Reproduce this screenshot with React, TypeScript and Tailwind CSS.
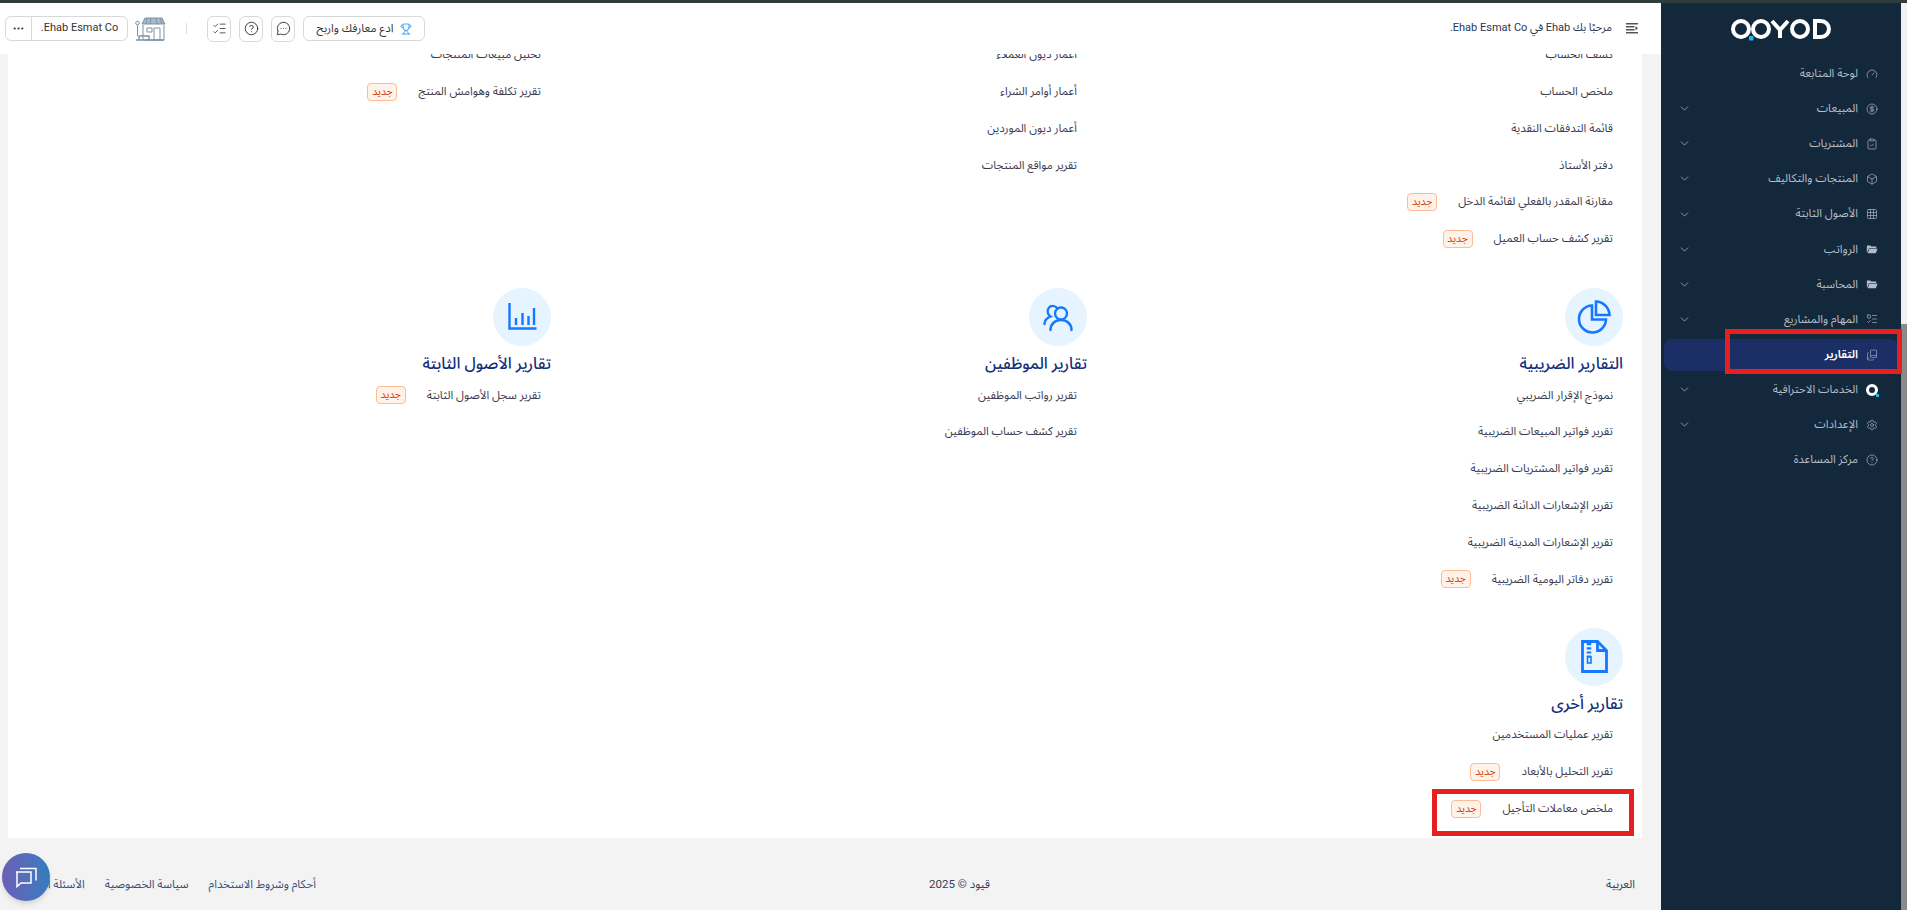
import React from 'react';
import {
  Gauge, CircleDollarSign, ClipboardCheck, Box, Grid3x3, ListTodo, BookCopy,
  Settings, CircleHelp, ChevronDown, MessageCircleMore, Trophy, ListChecks, Ellipsis,
} from 'lucide-react';

const font = 'font-["Roboto","Noto_Sans_Arabic","Noto_Sans","DejaVu_Sans",sans-serif]';

function FolderFill({ size }: { size?: number; strokeWidth?: number }) {
  return (
    <svg width={size} height={size} viewBox="0 0 14 14" fill="currentColor">
      <path d="M1 3h4l1.200 1.200H12V6H3.500L1.500 11H1z" />
      <path d="M4 6.800h9.500L11.500 12H2z" />
    </svg>
  );
}

const menu = [
  { label: 'لوحة المتابعة', icon: Gauge },
  { label: 'المبيعات', icon: CircleDollarSign, sub: true },
  { label: 'المشتريات', icon: ClipboardCheck, sub: true },
  { label: 'المنتجات والتكاليف', icon: Box, sub: true },
  { label: 'الأصول الثابتة', icon: Grid3x3, sub: true },
  { label: 'الرواتب', icon: FolderFill, sub: true },
  { label: 'المحاسبة', icon: FolderFill, sub: true },
  { label: 'المهام والمشاريع', icon: ListTodo, sub: true },
  { label: 'التقارير', icon: BookCopy, active: true },
  { label: 'الخدمات الاحترافية', icon: null, sub: true },
  { label: 'الإعدادات', icon: Settings, sub: true },
  { label: 'مركز المساعدة', icon: CircleHelp },
];

function Logo() {
  return (
    <svg width="102" height="22" viewBox="0 0 102 22" fill="none" stroke="#fff" strokeWidth="4">
      <circle cx="10" cy="10" r="8" />
      <circle cx="30" cy="10" r="8" />
      <path d="M41 2l8 9 8-9M49 11v8" />
      <circle cx="69" cy="10" r="8" />
      <path d="M84 2v16h6a8 8 0 0 0 0-16z" />
      <rect x="18" y="17" width="4.500" height="4.500" rx="1" fill="#29b6e8" stroke="none" />
    </svg>
  );
}

function Sidebar() {
  return (
    <aside className="w-[240px] shrink-0 bg-[#14283c] pt-[15px]">
      <div className="flex justify-center h-[36px] pt-px pl-[2px]">
        <Logo />
      </div>
      <nav className="mt-[3.5px] flex flex-col gap-[3.15px] px-[3px]">
        {menu.map((m) => (
          <div
            key={m.label}
            className={
              'h-[32px] flex items-center rounded-lg pr-[19px] pl-[14px] gap-[7px] text-[11.5px] ' +
              (m.active ? 'bg-[#1c2e66] text-white font-semibold' : 'text-[#b3bdc7]')
            }
          >
            <span className={'w-[14px] flex justify-center ' + (m.active ? 'text-[#a3aec2]' : '')}>
              {m.icon ? (
                <m.icon size={12} strokeWidth={1.3} />
              ) : (
                <span className="relative w-[12px] h-[12px] rounded-full border-[3px] border-white">
                  <span className="absolute -right-[4px] -bottom-[4px] w-[3px] h-[3px] bg-[#29b6e8]" />
                </span>
              )}
            </span>
            <span className="flex-1">{m.label}</span>
            {m.sub && <ChevronDown size={13} strokeWidth={1.6} className="text-[#9aa6b2]" />}
          </div>
        ))}
      </nav>
    </aside>
  );
}

function Tag() {
  return (
    <span className="mr-[21px] h-[18px] w-[30px] flex items-center justify-center rounded-[4px] border border-[#ffbb96] bg-[#fff2e8] text-[10.5px] text-[#d4380d]">
      جديد
    </span>
  );
}

type Item = { t: string; tag?: boolean };

function Rows({ items }: { items: Item[] }) {
  return (
    <ul className="pr-[10px]">
      {items.map((i) => (
        <li key={i.t} className="h-[36.8px] flex items-center text-[11.5px] text-[#3b3b4f]">
          <span>{i.t}</span>
          {i.tag && <Tag />}
        </li>
      ))}
    </ul>
  );
}

function Section({ title, icon, items }: { title: string; icon: React.ReactNode; items: Item[] }) {
  return (
    <div>
      <div className="w-[58px] h-[58px] rounded-full bg-[#e6f4ff] flex items-center justify-center">{icon}</div>
      <h3 className="mt-[5px] h-[26px] flex items-center text-[16px] font-medium text-[#14307a]">{title}</h3>
      <Rows items={items} />
    </div>
  );
}

const blue = '#1677ff';

const PieIcon = (
  <svg width="34" height="34" viewBox="0 0 34 34" fill="none" stroke={blue} strokeWidth="2.600">
    <path d="M15 5.500a13.500 13.500 0 1 0 14 14H15z" />
    <path d="M19 1.500v13.500h13.500A14 14 0 0 0 19 1.500z" />
  </svg>
);

const UsersIcon = (
  <svg width="30" height="30" viewBox="0 0 30 30" fill="none" stroke={blue} strokeWidth="2.400" strokeLinecap="round">
    <circle cx="18" cy="11.500" r="6" />
    <path d="M7.500 28c0-6 4.500-10 10.500-10s10.500 4 10.500 10" />
    <path d="M14.500 6.500A6 6 0 0 0 6.500 5a6 6 0 0 0 1 9.500C4 16 1.500 19 1.500 22" />
  </svg>
);

const BarsIcon = (
  <svg width="30" height="30" viewBox="0 0 30 30" fill="none" stroke={blue} strokeWidth="2.400">
    <path d="M2.500 1v25.500h27" />
    <path d="M9 16v7M15.500 11v12M21.500 14v9M27 6v17" />
  </svg>
);

const ZipIcon = (
  <svg width="27" height="33" viewBox="0 0 27 33" fill="none" stroke={blue} strokeWidth="2.800">
    <path d="M1.500 1.500h15l9 9v21h-24z" />
    <path d="M16.500 1.500v9h9" />
    <path d="M8 3v14" strokeDasharray="2.200 2" strokeWidth="4.500" />
    <rect x="6.500" y="17" width="3.500" height="6" strokeWidth="1.600" />
  </svg>
);

function TopBtn({ children }: { children: React.ReactNode }) {
  return (
    <span className="w-[24px] h-[26px] rounded-md border border-[#d9d9d9] flex items-center justify-center text-[#2e3742]">
      {children}
    </span>
  );
}

function ShopIcon() {
  return (
    <svg width="31" height="26" viewBox="0 0 31 26" fill="none" stroke="#7c93a8" strokeWidth="1">
      <path d="M10 2h17l3 6H7z" fill="#a9b8c6" />
      <path d="M12 2l-1 6M16 2l-1 6M21 2l1 6M25 2l2 6" />
      <path d="M8 9v15h21V9" />
      <path d="M12 12h5v4h-5zM19 12h6v12h-6z" />
      <path d="M4 24v-4h10v4M1 24h28" strokeWidth="1.400" />
      <circle cx="2.500" cy="7" r="1.800" />
      <path d="M2.500 9v11" />
    </svg>
  );
}

function ToggleIcon() {
  return (
    <svg width="12" height="11" viewBox="0 0 12 11" fill="#555">
      <path d="M0 0h12v1.400H0zM0 3h8.500v1.400H0zM0 6h8.500v1.400H0zM0 9h12v1.400H0zM9.500 3l2.500 2.200-2.500 2.200z" />
    </svg>
  );
}

function Header() {
  return (
    <header className="h-[51px] shrink-0 bg-white flex items-center justify-between pr-[23px] pl-[5px] text-[11px]">
      <div className="flex items-center gap-[14px] text-[#2a3550]">
        <ToggleIcon />
        <span>مرحبًا بك Ehab في Ehab Esmat Co.</span>
      </div>
      <div className="flex items-center">
        <button className="h-[25px] w-[122px] rounded-md border border-[#d9d9d9] flex items-center justify-center gap-[6px] text-[11.5px] text-[#333]">
          <Trophy size={12} strokeWidth={1.6} className="text-[#1890ff]" />
          ادع معارفك واربح
        </button>
        <div className="mr-[8px] flex gap-[8px]">
          <TopBtn><MessageCircleMore size={15} strokeWidth={1.5} /></TopBtn>
          <TopBtn><CircleHelp size={15} strokeWidth={1.5} /></TopBtn>
          <TopBtn><ListChecks size={15} strokeWidth={1.3} /></TopBtn>
        </div>
        <span className="mx-[20px] w-px h-[11px] bg-[#ddd]" />
        <ShopIcon />
        <div className="mr-[7px] w-[123px] h-[25px] rounded-md border border-[#d9d9d9] flex text-[11px] text-[#333]">
          <span className="flex-1 flex items-center justify-center">Ehab Esmat Co.</span>
          <span className="w-[26px] border-r border-[#d9d9d9] flex items-center justify-center">
            <Ellipsis size={13} />
          </span>
        </div>
      </div>
    </header>
  );
}

function Content() {
  return (
    <div className="flex-1 min-h-0 overflow-hidden bg-[#f3f3f3] pr-[19px] pl-[8px]">
      <div className="h-full overflow-hidden bg-white">
        <div className="-mt-[17.5px] pr-[19px] grid grid-cols-[repeat(3,536px)]">
          <Rows
            items={[
              { t: 'كشف الحساب' },
              { t: 'ملخص الحساب' },
              { t: 'قائمة التدفقات النقدية' },
              { t: 'دفتر الأستاذ' },
              { t: 'مقارنة المقدر بالفعلي لقائمة الدخل', tag: true },
              { t: 'تقرير كشف حساب العميل', tag: true },
            ]}
          />
          <Rows
            items={[
              { t: 'أعمار ديون العملاء' },
              { t: 'أعمار أوامر الشراء' },
              { t: 'أعمار ديون الموردين' },
              { t: 'تقرير مواقع المنتجات' },
            ]}
          />
          <Rows
            items={[
              { t: 'تحليل مبيعات المنتجات' },
              { t: 'تقرير تكلفة وهوامش المنتج', tag: true },
            ]}
          />
        </div>
        <div className="mt-[30.5px] pr-[19px] grid grid-cols-[repeat(3,536px)]">
          <Section
            title="التقارير الضريبية"
            icon={PieIcon}
            items={[
              { t: 'نموذج الإقرار الضريبي' },
              { t: 'تقرير فواتير المبيعات الضريبية' },
              { t: 'تقرير فواتير المشتريات الضريبية' },
              { t: 'تقرير الإشعارات الدائنة الضريبية' },
              { t: 'تقرير الإشعارات المدينة الضريبية' },
              { t: 'تقرير دفاتر اليومية الضريبية', tag: true },
            ]}
          />
          <Section
            title="تقارير الموظفين"
            icon={UsersIcon}
            items={[{ t: 'تقرير رواتب الموظفين' }, { t: 'تقرير كشف حساب الموظفين' }]}
          />
          <Section
            title="تقارير الأصول الثابتة"
            icon={BarsIcon}
            items={[{ t: 'تقرير سجل الأصول الثابتة', tag: true }]}
          />
        </div>
        <div className="mt-[30px] pr-[19px]">
          <Section
            title="تقارير أخرى"
            icon={ZipIcon}
            items={[
              { t: 'تقرير عمليات المستخدمين' },
              { t: 'تقرير التحليل بالأبعاد', tag: true },
              { t: 'ملخص معاملات التأجيل', tag: true },
            ]}
          />
        </div>
      </div>
    </div>
  );
}

function Footer() {
  return (
    <footer className="h-[72px] shrink-0 bg-[#f3f3f3] flex items-center pr-[26px] pl-[17px] pt-[22px] text-[11.5px]">
      <span className="w-[645px] text-[#3b3b4f]">العربية</span>
      <span className="text-[#3b3b4f]">قيود © 2025</span>
      <div className="mr-auto flex gap-[20px] text-[#33507a]">
        <span>أحكام وشروط الاستخدام</span>
        <span>سياسة الخصوصية</span>
        <span>الأسئلة الشائعة</span>
      </div>
    </footer>
  );
}

export default function App() {
  return (
    <div dir="rtl" className={'relative h-[910px] w-[1907px] overflow-hidden flex flex-col bg-white ' + font}>
      <div className="h-[3px] shrink-0 bg-[#2f3c3c]" />
      <div className="flex-1 min-h-0 flex">
        <div className="w-[6px] shrink-0 bg-[#f1f1f1] pt-[321px]">
          <div className="h-full bg-[#8a8a8a]" />
        </div>
        <Sidebar />
        <main className="flex-1 min-w-0 flex flex-col">
          <Header />
          <Content />
          <Footer />
        </main>
      </div>

      <button className="absolute left-[2px] top-[853px] w-[48px] h-[48px] rounded-full bg-gradient-to-r from-[#6a5fb5] to-[#2f7cc0] flex items-center justify-center shadow-md">
        <svg width="24" height="24" viewBox="0 0 24 24" fill="none" stroke="#fff" strokeWidth="1.500">
          <path d="M2 7h15v11H7l-4 3.500V7z" />
          <path d="M6 3.500h16v12" />
        </svg>
      </button>

      <div className="absolute left-[1725px] top-[329px] w-[177px] h-[45px] border-[5px] border-[#e81f1f]" />
      <div className="absolute left-[1432px] top-[789px] w-[202px] h-[47px] border-[5px] border-[#e81f1f]" />
    </div>
  );
}
